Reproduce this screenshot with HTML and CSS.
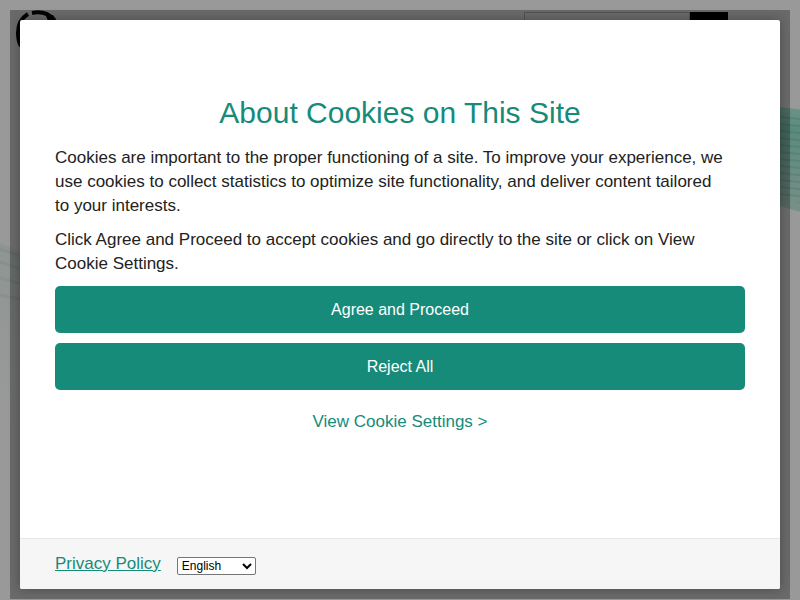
FILE: index.html
```html
<!DOCTYPE html>
<html lang="en">
<head>
<meta charset="utf-8">
<meta name="viewport" content="width=device-width, initial-scale=1">
<title>About Cookies on This Site</title>
<link rel="stylesheet" href="styles.css">
</head>
<body>
<div class="page" aria-hidden="true">
  <svg class="wave wave-right" width="40" height="120" viewBox="0 0 40 120">
    <defs>
      <linearGradient id="fade" x1="0" y1="0" x2="0" y2="1">
        <stop offset="0" stop-color="#6b9386"/>
        <stop offset=".2" stop-color="#5b8b7d"/>
        <stop offset="1" stop-color="#7a9089"/>
      </linearGradient>
      <pattern id="lines" width="40" height="7" patternUnits="userSpaceOnUse" patternTransform="skewY(6)">
        <path d="M0 3H40" stroke="#31594d" stroke-opacity=".4"/>
      </pattern>
    </defs>
    <path d="M0 0L40 5V111L0 99Z" fill="url(#fade)"/>
    <path d="M0 8L40 10V102L0 90Z" fill="url(#lines)"/>
  </svg>
  <svg class="wave wave-left" width="40" height="190" viewBox="0 0 40 190">
    <defs>
      <linearGradient id="mist" x1="0" y1="0" x2="0" y2="1">
        <stop offset="0" stop-color="#7c8f89" stop-opacity=".4"/>
        <stop offset="1" stop-color="#8c9491" stop-opacity="0"/>
      </linearGradient>
    </defs>
    <path d="M0 0L40 16V190H0Z" fill="url(#mist)"/>
    <path d="M0 6L40 20M0 19L40 32M0 35L40 46M0 52L40 60" fill="none" stroke="#536d65" stroke-opacity=".12" stroke-width="3"/>
  </svg>
  <svg class="logo" width="48" height="48" viewBox="0 0 48 48">
    <path d="M13 5Q3 11 3 24Q3 32 6 37M17 4Q31 1 39 11" fill="none" stroke="#030706" stroke-width="4"/>
    <path d="M31 7L38 6L42 12H33Z" fill="#030706"/>
  </svg>
  <div class="search"><span class="search-field"></span><span class="search-button"></span></div>
</div>
<div class="frame">
  <main class="dialog" role="dialog" aria-labelledby="title">
    <section class="content">
      <h1 id="title">About Cookies on This Site</h1>
      <p>Cookies are important to the proper functioning of a site. To improve your experience, we use cookies to collect statistics to optimize site functionality, and deliver content tailored to your interests.</p>
      <p>Click Agree and Proceed to accept cookies and go directly to the site or click on View Cookie Settings.</p>
      <div class="actions">
        <button type="button">Agree and Proceed</button>
        <button type="button">Reject All</button>
      </div>
      <a class="settings" href="#settings">View Cookie Settings &gt;</a>
    </section>
    <footer class="footer">
      <a href="#privacy">Privacy Policy</a>
      <select aria-label="Language"><option>English</option></select>
    </footer>
  </main>
</div>
</body>
</html>
```
FILE: styles.css
```css
* {
  box-sizing: border-box;
}

body {
  margin: 0;
  background: #999;
  color: #222;
  font: 17px/24px "Liberation Sans", Arial, sans-serif;
}

.page {
  position: absolute;
  inset: 0;
  overflow: hidden;
}

.wave,
.logo,
.search {
  position: absolute;
}

.wave-right {
  top: 107px;
  right: -20px;
}

.wave-left {
  top: 243px;
  left: 0;
}

.logo {
  top: 9px;
  left: 15px;
}

.search {
  top: 12px;
  right: 72px;
  display: flex;
  width: 204px;
  height: 32px;
}

.search-field {
  flex: 1;
  border: 1px solid #777;
}

.search-button {
  width: 38px;
  background: #000;
}

.frame {
  position: relative;
  display: flex;
  min-height: calc(100vh - 11px);
  margin: 10px 10px 1px;
  padding: 10px;
  background: rgba(0, 0, 0, 0.3);
}

.dialog {
  display: flex;
  flex: 1;
  flex-direction: column;
  background: #fff;
  border-radius: 2px;
  box-shadow: 0 0 12px rgba(0, 0, 0, 0.3);
}

.content {
  display: flex;
  flex: 1;
  flex-direction: column;
  padding: 75px 35px 20px;
}

h1 {
  margin: 0 0 15px;
  color: #168b7a;
  font-size: 30px;
  font-weight: 400;
  line-height: 36px;
  text-align: center;
}

p {
  max-width: 672px;
  margin: 0 0 10px;
}

.actions {
  display: grid;
  gap: 10px;
}

button {
  height: 47px;
  border: 0;
  border-radius: 5px;
  background: #168b7a;
  color: #fff;
  font: 16px "Liberation Sans", Arial, sans-serif;
}

a {
  color: #168b7a;
}

.settings {
  align-self: center;
  margin-top: 20px;
  text-decoration: none;
}

.footer {
  display: flex;
  align-items: center;
  gap: 16px;
  height: 51px;
  padding: 0 35px;
  border-top: 1px solid #e8e8e8;
  border-radius: 0 0 2px 2px;
  background: #f6f6f6;
}

select {
  width: 79px;
  height: 18px;
  margin-top: 4px;
  padding: 0;
  border: 1px solid #767676;
  border-radius: 2px;
  background-color: #fff;
  color: #000;
  font: 12px "Liberation Sans", Arial, sans-serif;
}
```
